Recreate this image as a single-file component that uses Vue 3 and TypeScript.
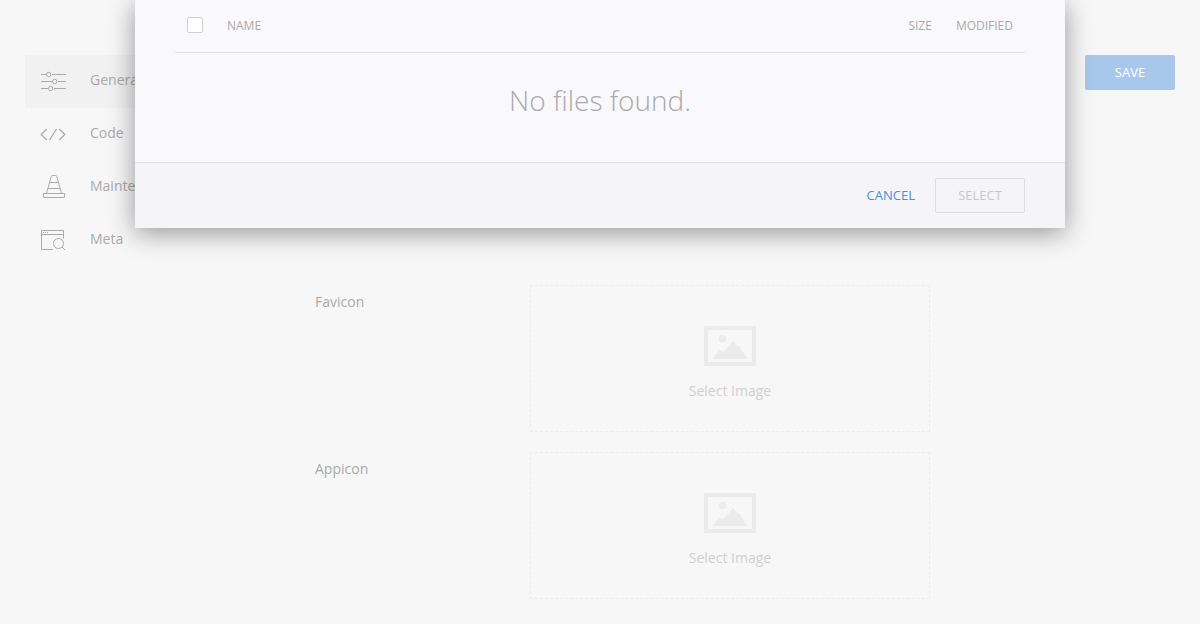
<script setup lang="ts">
interface NavItem {
  id: string
  label: string
}

const navItems: NavItem[] = [
  { id: 'general', label: 'General' },
  { id: 'code', label: 'Code' },
  { id: 'maintenance', label: 'Maintenance' },
  { id: 'meta', label: 'Meta' },
]
const activeItem = 'general'

const imageFields: NavItem[] = [
  { id: 'favicon', label: 'Favicon' },
  { id: 'appicon', label: 'Appicon' },
]
</script>

<template>
  <div class="page">
    <main class="settings">
      <nav class="nav">
        <a
          v-for="item in navItems"
          :key="item.id"
          href="#"
          class="nav-item"
          :class="{ active: item.id === activeItem }"
        >
          <svg class="nav-icon" viewBox="0 0 28 28" aria-hidden="true">
            <g v-if="item.id === 'general'">
              <path d="M1 7.500h5.500M12 7.500h14M1 14.500h11.500M18 14.500h8M1 21.500h7.500M14 21.500h12" />
              <circle cx="8.700" cy="7.500" r="2.200" />
              <circle cx="14.700" cy="14.500" r="2.200" />
              <circle cx="10.700" cy="21.500" r="2.200" />
            </g>
            <g v-else-if="item.id === 'code'" class="bold">
              <path d="M6.700 9l-5.500 5.500 5.500 5.500M19.300 9l5.500 5.500-5.500 5.500M16.500 9l-7 11" />
            </g>
            <g v-else-if="item.id === 'maintenance'">
              <path d="M3.500 20.500h21v4h-21zM6.500 20.500L11.200 3.500Q11.500 2.500 12.500 2.500h3Q16.500 2.500 16.800 3.500L21.500 20.500M9.500 9.500h9M8 15.500h12" />
            </g>
            <g v-else>
              <path d="M13 23.500H1.500v-19h22v8M1.500 8.500h22M3 6.500h1M5 6.500h1M7 6.500h1" />
              <circle cx="18.500" cy="17.500" r="5" />
              <path d="M22 21l3 3" />
            </g>
          </svg>
          <span>{{ item.label }}</span>
        </a>
      </nav>

      <form class="form" @submit.prevent>
        <div v-for="field in imageFields" :key="field.id" class="field">
          <label class="field-label" :for="field.id">{{ field.label }}</label>
          <button :id="field.id" type="button" class="drop">
            <svg class="drop-icon" viewBox="0 0 52 40" aria-hidden="true">
              <path fill-rule="evenodd" d="M0 0h52v40H0zM4 4v32h44V4z" />
              <circle cx="18.500" cy="12.700" r="3.700" />
              <path d="M8.500 33l7-9 2.500 1.500h2L29 15l4.500 5.500 1.500-.5 8.500 13z" />
            </svg>
            <span>Select Image</span>
          </button>
        </div>
      </form>

      <button type="button" class="btn save">SAVE</button>
    </main>

    <section class="dialog" role="dialog" aria-label="Select file">
      <div class="dialog-body">
        <table class="files">
          <thead>
            <tr>
              <th class="check"><input type="checkbox" aria-label="Select all" /></th>
              <th class="name">NAME</th>
              <th>SIZE</th>
              <th>MODIFIED</th>
            </tr>
          </thead>
        </table>
        <p class="empty">No files found.</p>
      </div>
      <footer class="dialog-footer">
        <a href="#" class="cancel">CANCEL</a>
        <button type="button" class="btn select" disabled>SELECT</button>
      </footer>
    </section>
  </div>
</template>

<style>
body {
  margin: 0;
  background: #f7f7f7;
}
</style>

<style scoped>
.page {
  position: relative;
  min-height: 100vh;
  box-sizing: border-box;
  padding: 55px 25px 25px;
  background: #f7f7f7;
  color: #aaa;
  font: 14px/20px "Open Sans", sans-serif;
}

.settings {
  display: grid;
  grid-template-columns: 260px minmax(0, 615px) minmax(90px, 1fr);
  column-gap: 30px;
  align-items: start;
}

.nav-item {
  display: flex;
  align-items: center;
  height: 53px;
  box-sizing: border-box;
  padding: 0 15px 2px;
  gap: 22px;
  color: inherit;
  text-decoration: none;
}

.nav-item span {
  padding-bottom: 2px;
}

.nav-item.active {
  background: #f1f1f1;
}

.nav-icon {
  width: 28px;
  height: 28px;
  fill: none;
  stroke: #aaa;
  stroke-width: 1;
}

.nav-icon .bold {
  stroke-width: 1.3;
}

.form {
  display: grid;
  gap: 20px;
  padding-top: 230px;
}

.field {
  display: grid;
  grid-template-columns: 215px minmax(0, 1fr);
}

.field-label {
  padding-top: 7px;
}

.drop {
  display: flex;
  flex-direction: column;
  align-items: center;
  gap: 15px;
  padding: 40px 20px 30px;
  border: 1px dashed #ececec;
  background: none;
  color: #d0d0d0;
  font: inherit;
}

.drop-icon {
  width: 52px;
  height: 40px;
  fill: #ebebeb;
}

.btn {
  width: 90px;
  height: 35px;
  padding: 0 0 2px;
  border-radius: 2px;
  font: 13px/20px "Open Sans", sans-serif;
}

.save {
  justify-self: end;
  border: 0;
  background: #a7c8ea;
  color: #fff;
}

.dialog {
  position: absolute;
  top: 0;
  left: 135px;
  right: 135px;
  background: #f9f9fc;
  box-shadow: 0 5px 25px rgba(0, 0, 0, 0.4);
}

.dialog-body {
  padding: 0 40px 42px;
}

.files {
  width: 100%;
  border-collapse: separate;
  border-spacing: 0;
  border-bottom: 1px solid #e4e4e6;
}

.files th {
  height: 52px;
  box-sizing: border-box;
  padding: 0 12px;
  text-align: left;
  font-size: 12px;
  font-weight: 400;
  line-height: 20px;
}

.files .check {
  width: 40px;
  padding-bottom: 2px;
}

.files .name {
  width: 100%;
}

.check input {
  display: block;
  appearance: none;
  width: 16px;
  height: 16px;
  margin: 0;
  border: 1px solid #d0d0d2;
  border-radius: 2px;
  background: #fff;
}

.empty {
  margin: 27px 0 0;
  text-align: center;
  font-size: 28px;
  font-weight: 300;
  line-height: 40px;
}

.dialog-footer {
  display: flex;
  justify-content: flex-end;
  align-items: center;
  gap: 20px;
  padding: 15px 40px;
  border-top: 1px solid #e2e2e4;
  background: #f5f5f8;
}

.cancel {
  padding-bottom: 2px;
  color: #4a90d6;
  font-size: 13px;
  text-decoration: none;
}

.select {
  border: 1px solid #dedee0;
  background: transparent;
  color: #c8c8ca;
}
</style>
